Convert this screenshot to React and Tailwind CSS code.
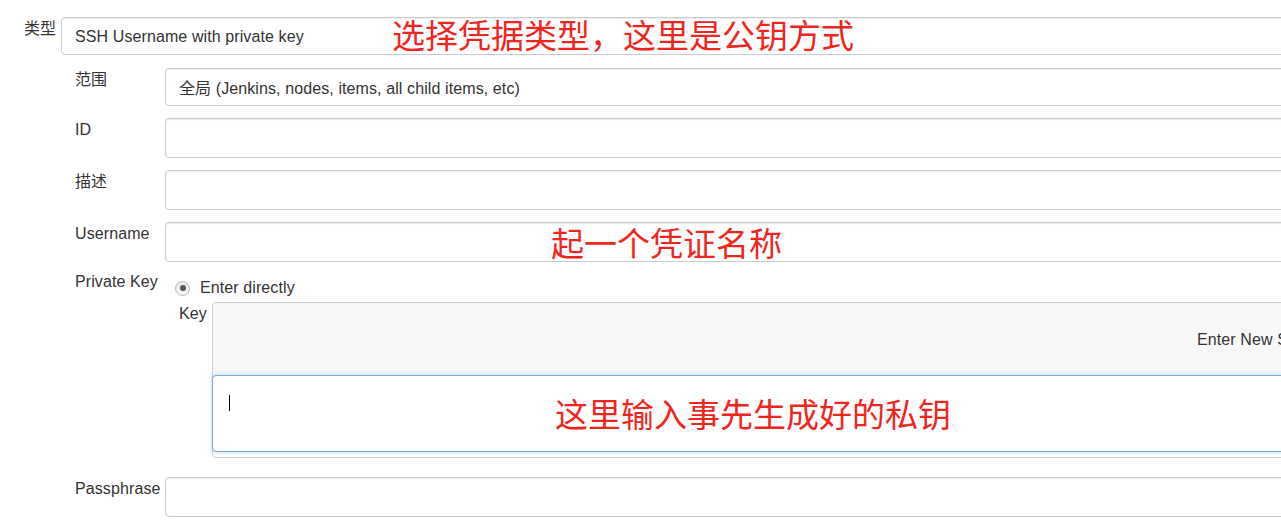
import React from "react";

const box =
  "border border-[#cccccc] rounded-[4px] bg-white shadow-[inset_0_1px_1px_rgba(0,0,0,0.075)]";

function SubRow({ label, className = "", h = "h-[40px]", inner = "", children }) {
  return (
    <div className={`flex items-start ${className}`}>
      <div className="w-[90px] shrink-0 leading-[24px]">{label}</div>
      <div className={`flex-1 ${box} ${h} flex items-center px-[13px] ${inner}`}>{children}</div>
    </div>
  );
}

export default function App() {
  return (
    <div className="relative w-[1281px] h-[531px] overflow-hidden bg-white text-[16px] tracking-[0.1px] text-[#333333] font-['Liberation_Sans','Noto_Sans_CJK_SC',sans-serif]">
      <div className="w-[1700px] pt-[17px]">
        {/* 类型 */}
        <div className="flex items-start pl-[24px]">
          <div className="w-[37px] shrink-0 leading-[24px] tracking-normal">类型</div>
          <div className={`flex-1 ${box} h-[38px] flex items-center px-[13px] pt-[1px]`}>
            SSH Username with private key
          </div>
        </div>

        <div className="pl-[75px]">
          <SubRow label="范围" className="mt-[13px]" h="h-[38px]" inner="pt-[4px]">
            全局 (Jenkins, nodes, items, all child items, etc)
          </SubRow>
          <SubRow label="ID" className="mt-[12px]" />
          <SubRow label="描述" className="mt-[12px]" />
          <SubRow label="Username" className="mt-[12px]" />

          {/* Private Key */}
          <div className="flex items-start mt-[8px]">
            <div className="w-[90px] shrink-0 leading-[24px]">Private Key</div>
            <div className="flex-1">
              <div className="flex items-center mt-[6px] ml-[10px] leading-[24px] gap-[10px]">
                <div className="w-[15px] h-[15px] rounded-full border border-[#b8b8b8] bg-gradient-to-b from-[#e9e9e9] to-[#f6f6f6] flex items-center justify-center">
                  <div className="w-[6px] h-[6px] rounded-full bg-[#555555]" />
                </div>
                <span>Enter directly</span>
              </div>
              <div className="flex items-start mt-[2px] pl-[14px]">
                <div className="w-[33px] shrink-0 leading-[24px]">Key</div>
                <div className="flex-1 border border-[#cccccc] rounded-[4px] bg-white">
                  <div className="h-[72px] bg-[#f7f7f7] rounded-t-[4px] flex items-center pl-[984px] pt-[2px]">
                    Enter New Secret Below
                  </div>
                  <div className="-ml-[1px] h-[77px] border border-[#7ea8de] rounded-[4px] bg-white shadow-[0_0_4px_rgba(102,175,233,0.5)] pt-[19px] pl-[16px]">
                    <div className="w-[1px] h-[16px] bg-black" />
                  </div>
                  <div className="h-[5px]" />
                </div>
              </div>
            </div>
          </div>

          <SubRow label="Passphrase" className="mt-[19px]" />
        </div>
      </div>

      {/* red annotations */}
      <div className="absolute left-[392px] top-[18px] text-[33px] leading-none tracking-normal text-[#f0261e] font-['Noto_Sans_CJK_SC',sans-serif] whitespace-nowrap">
        选择凭据类型，这里是公钥方式
      </div>
      <div className="absolute left-[551px] top-[226px] text-[33px] leading-none tracking-normal text-[#f0261e] font-['Noto_Sans_CJK_SC',sans-serif] whitespace-nowrap">
        起一个凭证名称
      </div>
      <div className="absolute left-[555px] top-[397px] text-[33px] leading-none tracking-normal text-[#f0261e] font-['Noto_Sans_CJK_SC',sans-serif] whitespace-nowrap">
        这里输入事先生成好的私钥
      </div>
    </div>
  );
}
